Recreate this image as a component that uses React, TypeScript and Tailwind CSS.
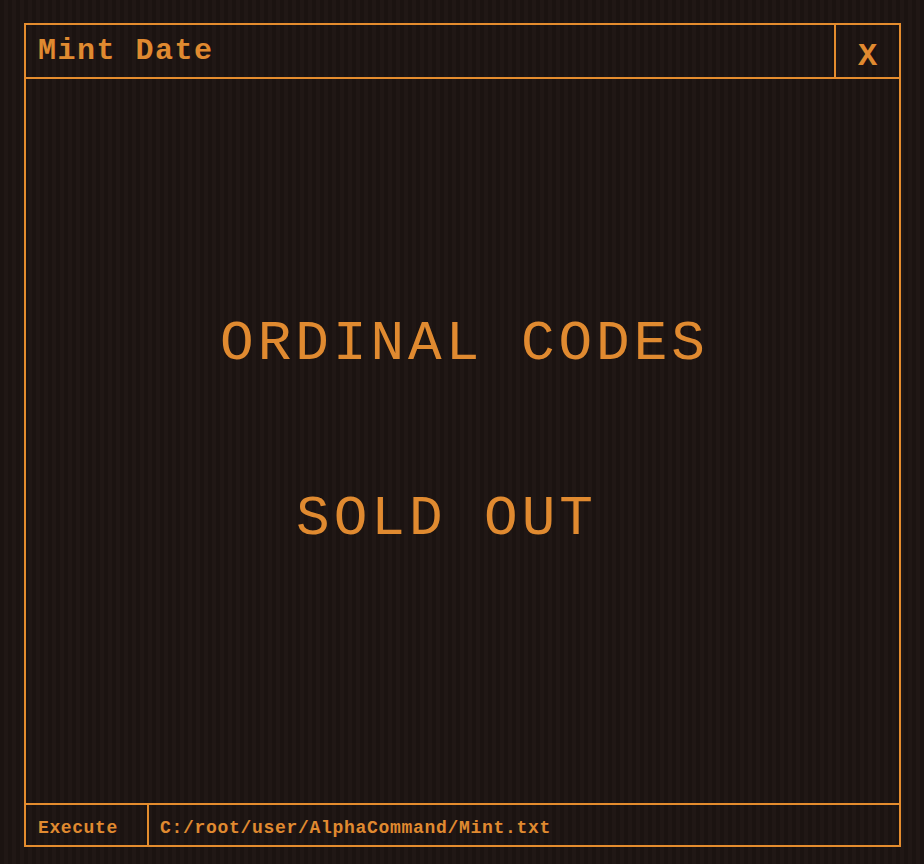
export default function App() {
  const mono = { fontFamily: '"Liberation Mono", "Courier New", monospace' }

  return (
    <div
      className="w-[924px] h-[864px] bg-[repeating-linear-gradient(90deg,#1b1311_0px,#1b1311_4px,#201715_4px,#201715_8px)] pt-[23px] pl-[24px]"
      style={mono}
    >
      {/* window */}
      <div className="w-[877px] h-[824px] border-2 border-[#e48c2e] flex flex-col text-[#e08a30]">
        {/* title bar */}
        <div className="h-[54px] flex border-b-2 border-[#e48c2e]">
          <div className="flex-1 flex items-center pl-[12px] pt-[1px] text-[30px] font-bold tracking-[1.5px]">Mint Date</div>
          <div className="w-[65px] border-l-2 border-[#e48c2e] flex items-center justify-center pt-[12px] text-[32px] font-bold">X</div>
        </div>

        {/* content */}
        <div className="flex-1 flex flex-col items-center pt-[237px]">
          <div className="text-[56px] leading-none tracking-[4px] pl-[4px]">ORDINAL CODES</div>
          <div className="text-[56px] leading-none tracking-[4px] mt-[119px] pr-[32px]">SOLD OUT</div>
        </div>

        {/* status bar */}
        <div className="h-[42px] flex border-t-2 border-[#e48c2e] text-[18px] font-bold">
          <div className="w-[123px] border-r-2 border-[#e48c2e] flex items-center pl-[12px] pt-[7px] tracking-[0.6px]">Execute</div>
          <div className="flex-1 flex items-center pl-[11px] pt-[7px] tracking-[0.7px]">C:/root/user/AlphaCommand/Mint.txt</div>
        </div>
      </div>
    </div>
  )
}
